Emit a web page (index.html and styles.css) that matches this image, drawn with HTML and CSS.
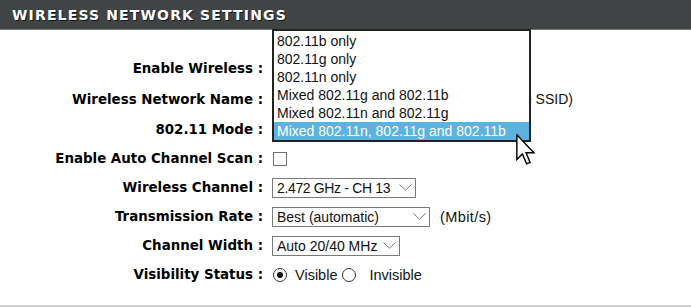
FILE: index.html
```html
<!DOCTYPE html>
<html>
<head>
<meta charset="utf-8">
<link rel="stylesheet" href="styles.css">
</head>
<body>
<div class="panel">
  <div class="header">WIRELESS NETWORK SETTINGS</div>
  <div class="form">
    <div class="row">
      <div class="label">Enable Wireless :</div>
      <div class="value"><span class="check"></span></div>
    </div>
    <div class="row tall">
      <div class="label">Wireless Network Name :</div>
      <div class="value"><span class="input"></span><span class="note">(Also called the SSID)</span></div>
    </div>
    <div class="row">
      <div class="label">802.11 Mode :</div>
      <div class="value"><span class="select w-mode"></span></div>
    </div>
    <div class="row">
      <div class="label">Enable Auto Channel Scan :</div>
      <div class="value"><span class="check"></span></div>
    </div>
    <div class="row">
      <div class="label">Wireless Channel :</div>
      <div class="value"><span class="select w-chan"><span class="tight">2.472 GHz - CH 13</span><svg class="chev" width="13" height="7" viewBox="0 0 13 7"><polyline points="0.5,0.5 6.5,6.2 12.5,0.5" fill="none" stroke="#777" stroke-width="1"/></svg></span></div>
    </div>
    <div class="row">
      <div class="label">Transmission Rate :</div>
      <div class="value"><span class="select w-rate">Best (automatic)<svg class="chev" width="13" height="7" viewBox="0 0 13 7"><polyline points="0.5,0.5 6.5,6.2 12.5,0.5" fill="none" stroke="#777" stroke-width="1"/></svg></span><span class="unit">(Mbit/s)</span></div>
    </div>
    <div class="row">
      <div class="label">Channel Width :</div>
      <div class="value"><span class="select w-width">Auto 20/40 MHz<svg class="chev" width="13" height="7" viewBox="0 0 13 7"><polyline points="0.5,0.5 6.5,6.2 12.5,0.5" fill="none" stroke="#777" stroke-width="1"/></svg></span></div>
    </div>
    <div class="row">
      <div class="label">Visibility Status :</div>
      <div class="value"><span class="radio on"></span><span class="rtext">Visible</span><span class="radio"></span><span class="rtext gap">Invisible</span></div>
    </div>
  </div>
  <ul class="list">
    <li>802.11b only</li>
    <li>802.11g only</li>
    <li>802.11n only</li>
    <li>Mixed 802.11g and 802.11b</li>
    <li>Mixed 802.11n and 802.11g</li>
    <li class="sel">Mixed 802.11n, 802.11g and 802.11b</li>
  </ul>
  <svg class="cursor" width="20" height="31" viewBox="0 0 12.5 19.5">
    <path d="M0.5 0.5 L0.5 16 L4 12.6 L6.6 18.8 L8.8 17.9 L6.3 11.8 L11.2 11.8 Z" fill="#fff" stroke="#000" stroke-width="0.9" stroke-linejoin="miter"/>
  </svg>
</div>
</body>
</html>
```
FILE: styles.css
```css
html, body {
  margin: 0;
  padding: 0;
  background: #fff;
}
.panel {
  position: relative;
  width: 691px;
  height: 307px;
  overflow: hidden;
  border-bottom: 2px solid #cfcfcf;
  box-sizing: border-box;
}
.header {
  height: 29px;
  background: #404444;
  border-bottom: 1px solid #7a7a7a;
  box-sizing: content-box;
  color: #fff;
  font-family: "DejaVu Sans", Verdana, sans-serif;
  font-weight: bold;
  font-size: 14px;
  letter-spacing: 1.15px;
  line-height: 30px;
  padding-left: 12px;
  text-shadow: 1px 1px 0 #1a1a1a;
}
.form {
  padding-top: 24px;
}
.row {
  display: flex;
  align-items: center;
  height: 29px;
}
.row.tall {
  height: 32px;
}
.label {
  width: 263px;
  text-align: right;
  font-family: "DejaVu Sans", Verdana, sans-serif;
  font-weight: bold;
  font-size: 13.4px;
  color: #000;
  flex: none;
}
.value {
  display: flex;
  align-items: center;
  margin-left: 9px;
  font-family: "Liberation Sans", Arial, sans-serif;
  font-size: 14px;
  color: #111;
}
.check {
  width: 14px;
  height: 14px;
  border: 1px solid #707070;
  background: #fff;
  box-sizing: border-box;
  margin-left: 1px;
}
.input {
  width: 159px;
  height: 21px;
  border: 1px solid #999;
  box-sizing: border-box;
}
.note {
  margin-left: 5px;
}
.select {
  position: relative;
  height: 20px;
  border: 1px solid #7a7a7a;
  box-sizing: border-box;
  padding-left: 4px;
  line-height: 18px;
  background: #fff;
  color: #111;
}
.tight {
  letter-spacing: -0.35px;
}
.w-mode { width: 258px; }
.w-chan { width: 144px; }
.w-rate { width: 158px; }
.w-width { width: 128px; }
.chev {
  position: absolute;
  right: 3px;
  top: 5px;
}
.unit {
  margin-left: 10px;
  letter-spacing: 0.4px;
  font-size: 14.5px;
}
.radio {
  width: 14px;
  height: 14px;
  border: 1px solid #333;
  border-radius: 50%;
  box-sizing: border-box;
  position: relative;
  margin-left: 1px;
  background: #fff;
}
.radio.on::after {
  content: "";
  position: absolute;
  left: 3px;
  top: 3px;
  width: 6px;
  height: 6px;
  border-radius: 50%;
  background: #111;
}
.rtext {
  margin-left: 8px;
  margin-right: 4px;
  font-size: 14.5px;
}
.rtext.gap {
  margin-left: 13px;
}
.list {
  position: absolute;
  left: 272px;
  top: 29px;
  width: 259px;
  margin: 0;
  padding: 1px 0 0;
  list-style: none;
  border: 2px solid #222;
  background: #fff;
  box-sizing: border-box;
  font-family: "Liberation Sans", Arial, sans-serif;
  font-size: 14px;
  color: #111;
}
.list li {
  height: 18px;
  line-height: 18px;
  padding-left: 3px;
  white-space: nowrap;
}
.list li.sel {
  background: #5cb3e0;
  color: #fff;
}
.cursor {
  position: absolute;
  left: 516px;
  top: 134px;
}
```
